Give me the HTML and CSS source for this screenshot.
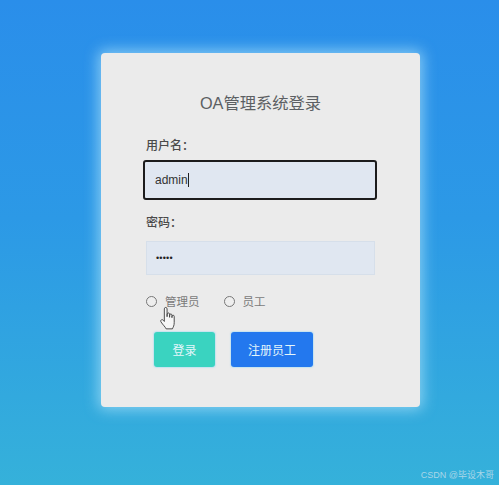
FILE: index.html
```html
<!DOCTYPE html>
<html lang="zh">
<head>
<meta charset="utf-8">
<title>OA管理系统登录</title>
<link rel="stylesheet" href="styles.css">
</head>
<body>
<main class="card">
  <h1 class="title">OA管理系统登录</h1>
  <div class="field">
    <label class="label">用户名：</label>
    <div class="input focused"><span>admin</span><i class="caret"></i></div>
  </div>
  <div class="field second">
    <label class="label">密码：</label>
    <div class="input"><span class="dots">•••••</span></div>
  </div>
  <div class="roles">
    <span class="role"><i class="radio"></i>管理员</span>
    <span class="role"><i class="radio"></i>员工</span>
    <svg class="hand" viewBox="1 0 14 21" width="17" height="25">
      <path d="M4.500 13V2.400c0-1.600 2.300-1.600 2.300 0V9l.1-2.200c0-1.300 2-1.300 2 0V9.500l.1-1.900c0-1.200 1.900-1.200 1.900 0v2.200l.1-1.200c0-1.100 1.800-1.100 1.800 0v5.400c0 2.500-.8 3.500-1.500 5.200H6c-.8-1.800-2.500-3.100-4.300-5.800-.9-1.400.8-2.700 2-1.400z" fill="#f6f6f6" stroke="#444" stroke-width=".8" stroke-linejoin="round"/>
    </svg>
  </div>
  <div class="actions">
    <button class="btn login">登录</button>
    <button class="btn register">注册员工</button>
  </div>
</main>
<div class="mark">CSDN @毕设木哥</div>
</body>
</html>
```
FILE: styles.css
```css
* { box-sizing: border-box; }
html, body { margin: 0; height: 100%; }
body {
  width: 499px;
  height: 485px;
  overflow: hidden;
  padding: 53px 0 0 101px;
  position: relative;
  background: linear-gradient(180deg, #2a8eea 0%, #2c99e6 45%, #35b1da 100%);
  font-family: "Liberation Sans", "Noto Sans CJK SC", sans-serif;
}
.card {
  width: 319px;
  height: 354px;
  background: #ebebeb;
  border-radius: 4px;
  box-shadow: 0 0 14px 3px rgba(170, 225, 250, .7);
  padding: 38px 44px 0 44px;
  display: flex;
  flex-direction: column;
}
.title {
  margin: 0;
  font-size: 16.300px;
  line-height: 24px;
  font-weight: 400;
  color: #5c5f63;
  text-align: center;
}
.field { margin-top: 22px; }
.field.second { margin-top: 14px; }
.label {
  display: block;
  font-size: 12px;
  line-height: 18px;
  color: #4a4a4a;
  font-weight: 500;
  padding-left: 1px;
}
.input {
  margin-top: 9px;
  width: 229px;
  height: 34px;
  margin-left: 1px;
  background: #e0e7f1;
  border: 1px solid #d6dfea;
  display: flex;
  align-items: center;
  padding-left: 9px;
  font-size: 12px;
  color: #333;
}
.input.focused {
  width: 234px;
  height: 40px;
  margin-top: 5px;
  margin-left: -2px;
  border: 2px solid #1c1c1c;
  border-radius: 3px;
  padding-left: 10px;
}
.caret {
  width: 1px;
  height: 14px;
  background: #222;
}
.dots { font-size: 9px; letter-spacing: .2px; color: #222; }
.roles {
  position: relative;
  display: flex;
  gap: 24px;
  margin-top: 17px;
  margin-left: 1px;
  height: 18px;
  align-items: center;
  font-size: 11.500px;
  color: #7a7a7a;
}
.role { display: flex; align-items: center; gap: 8px; }
.radio {
  width: 11px;
  height: 11px;
  border: 1px solid #777;
  border-radius: 50%;
  background: #eee;
}
.hand { position: absolute; left: 14px; top: 14px; }
.actions {
  display: flex;
  gap: 16px;
  margin-top: 22px;
  padding-left: 9px;
}
.btn {
  height: 35px;
  border: 0;
  border-radius: 3px;
  color: #e4f6fb;
  font-family: inherit;
  font-size: 12px;
  box-shadow: 0 0 1px 1px rgba(160, 220, 245, .5);
}
.login { width: 61px; background: #3ad3c0; }
.register { width: 82px; background: #2378ee; }
.mark {
  position: absolute;
  right: 5px;
  bottom: 4px;
  font-size: 9px;
  line-height: 12px;
  color: #a9d6e8;
}
```
